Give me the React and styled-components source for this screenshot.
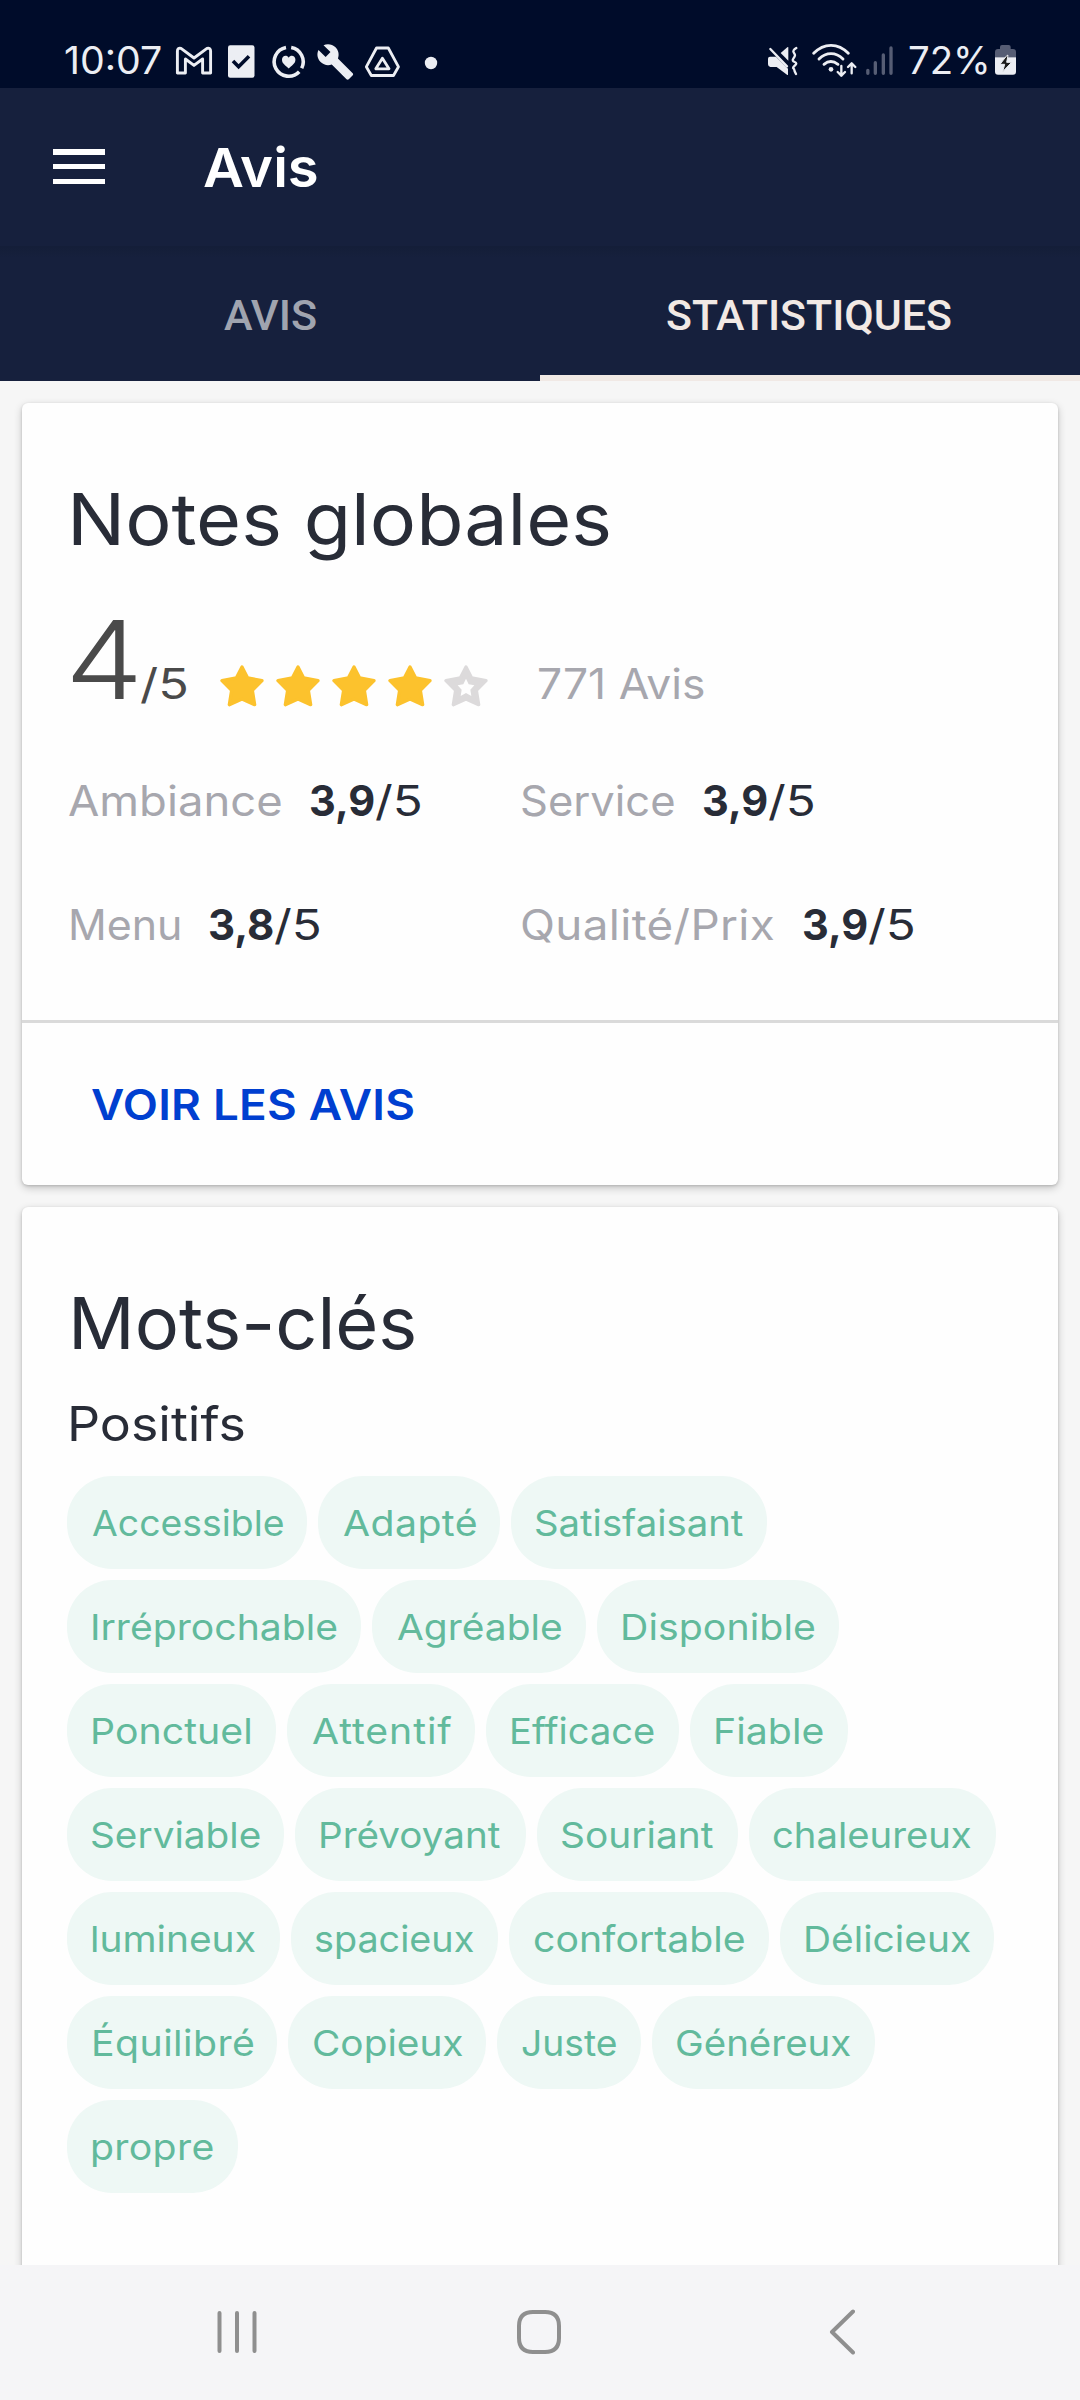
import React, { useLayoutEffect, useRef, useState } from "react";
import styled, { createGlobalStyle } from "styled-components";

const GlobalStyle = createGlobalStyle`
  * { box-sizing: border-box; }
  body { margin: 0; background: #f6f6f6; }
`;

const SANS = `Inter, "Open Sans", sans-serif`;

const TextBox = styled.span`
  display: inline-block;
  flex: none;
  white-space: pre;
  text-align: left;
  font-kerning: normal;
  margin-left: ${(p) => p.$inset || 0}px;
`;

const TextInk = styled.span`
  display: inline-block;
  transform-origin: 0 50%;
`;

/* Widens its text (first the letters, up to `stretch`, then the tracking)
   so that the drawn glyphs span exactly `width` pixels. */
function Fitted({ width, inset, stretch = 1.09, children }) {
  const ref = useRef(null);
  const [fit, setFit] = useState({ shift: 0, tracking: 0, scale: 1 });
  useLayoutEffect(() => {
    const cs = getComputedStyle(ref.current);
    const ctx = document.createElement("canvas").getContext("2d");
    ctx.font = `${cs.fontWeight} ${cs.fontSize} ${cs.fontFamily}`;
    const m = ctx.measureText(children);
    const ink = m.actualBoundingBoxLeft + m.actualBoundingBoxRight;
    const gaps = Math.max(children.length - 1, 1);
    const scale = Math.min(width / ink, stretch);
    setFit({
      scale,
      shift: m.actualBoundingBoxLeft * scale,
      tracking: children.length > 1 ? (width / scale - ink) / gaps : 0,
    });
  }, [children, width, stretch]);
  return (
    <TextBox ref={ref} $inset={inset} style={{ width }}>
      <TextInk
        style={{
          letterSpacing: fit.tracking,
          marginLeft: fit.shift,
          transform: `scaleX(${fit.scale})`,
        }}
      >
        {children}
      </TextInk>
    </TextBox>
  );
}

const Screen = styled.div`
  width: 1080px;
  height: 2400px;
  display: flex;
  flex-direction: column;
  overflow: hidden;
  background: #f6f6f6;
  font-family: ${SANS};
  color: #282c37;
`;

const StatusBar = styled.header`
  flex: none;
  height: 88px;
  padding: 34px 64px 0 65px;
  display: flex;
  justify-content: space-between;
  background: #000c2a;
  color: #eceef3;
`;

const StatusGroup = styled.div`
  display: flex;
  height: 54px;
`;

const StatusText = styled.div`
  font-size: 38.5px;
  line-height: 52px;
  font-weight: 400;
`;

const StatusIcon = styled.svg`
  display: block;
  flex: none;
  height: 46px;
  margin: 4px 0 0 ${(p) => p.$gap}px;
  overflow: visible;
`;

const AppBar = styled.div`
  flex: none;
  height: 158px;
  padding-left: 53px;
  display: flex;
  align-items: center;
  background: #16203d;
`;

const MenuButton = styled.button`
  width: 52px;
  height: 35px;
  margin-bottom: 1px;
  padding: 0;
  border: 0;
  background: none;
  display: flex;
  flex-direction: column;
  justify-content: space-between;
`;

const MenuLine = styled.span`
  height: 5.5px;
  background: #fff;
`;

const AppTitle = styled.h1`
  margin: 2px 0 0 99px;
  font-size: 54px;
  line-height: 64px;
  font-weight: 600;
  color: #fff;
`;

const Tabs = styled.nav`
  flex: none;
  height: 135px;
  display: grid;
  grid-template-columns: 1fr 1fr;
  background: linear-gradient(#141e38, #16203d 12px);
`;

const Tab = styled.div`
  display: flex;
  align-items: center;
  justify-content: center;
  padding-top: ${(p) => (p.$active ? 9 : 3)}px;
  padding-right: ${(p) => (p.$active ? 2 : 0)}px;
  border-bottom: ${(p) => (p.$active ? "6px solid #f1e9e5" : "0")};
  font-family: Roboto, sans-serif;
  font-size: 43px;
  font-weight: 500;
  color: ${(p) => (p.$active ? "#f1e9e5" : "#a0a4af")};
`;

const Content = styled.main`
  flex: 1;
  min-height: 0;
  overflow: hidden;
  padding: 22px;
  display: flex;
  flex-direction: column;
  gap: 22px;
`;

const Card = styled.section`
  flex: none;
  height: ${(p) => p.$height}px;
  display: flex;
  flex-direction: column;
  border-radius: 6px;
  background: #fefefe;
  box-shadow: 0 3px 9px rgba(0, 0, 0, 0.2), 0 1px 3px rgba(0, 0, 0, 0.16);
`;

const CardBody = styled.div`
  flex: 1;
  padding: 72px 22px 0 45px;
`;

const CardTitle = styled.h2`
  margin: 0;
  font-size: 72px;
  line-height: 88px;
  font-weight: 370;
`;

const RatingRow = styled.div`
  margin-top: 42px;
  height: 109px;
  display: flex;
  align-items: baseline;
  font-size: 42px;
  line-height: 52px;
  font-weight: 375;
  color: #4a4a4a;
`;

const Score = styled.span`
  font-size: 109px;
  line-height: 109px;
  font-weight: 320;
`;

const Stars = styled.span`
  display: flex;
  gap: 12px;
  margin: 0 0 7px 33px;
  align-self: flex-end;
`;

const StarSvg = styled.svg`
  display: block;
  width: 44px;
  height: 42px;
`;

const ReviewCount = styled.span`
  margin-left: 51px;
  color: #a7a7ae;
`;

const StatGrid = styled.div`
  margin-top: 57px;
  padding-left: 2px;
  display: grid;
  grid-template-columns: 453px 1fr;
  row-gap: 64px;
`;

const Stat = styled.div`
  display: flex;
  height: 60px;
  font-size: 42px;
  line-height: 60px;
  font-weight: 375;
`;

const StatLabel = styled.span`
  color: #a7a7ae;
  margin-right: 30px;
`;

const StatScore = styled.strong`
  font-weight: 700;
  margin-right: 1px;
`;

const CardFooter = styled.div`
  height: 165px;
  border-top: 3px solid #dadada;
  padding: 2px 0 0 70px;
  display: flex;
  align-items: center;
`;

const LinkButton = styled.button`
  padding: 0;
  border: 0;
  background: none;
  font-family: inherit;
  font-size: 42px;
  line-height: 60px;
  font-weight: 580;
  color: #003fd0;
`;

const Subtitle = styled.h3`
  margin: 27px 0 0;
  font-size: 48px;
  line-height: 60px;
  font-weight: 370;
`;

const ChipList = styled.div`
  margin-top: 22px;
  display: flex;
  flex-wrap: wrap;
  gap: 11px;
`;

const Chip = styled.span`
  width: ${(p) => p.$width}px;
  height: 93px;
  padding-top: 1px;
  border-radius: 45px;
  background: #eef8f5;
  color: #62ba9c;
  font-size: 36px;
  line-height: 93px;
  font-weight: 380;
`;

const NavBar = styled.footer`
  flex: none;
  height: 135px;
  padding: 44px 0 0 217px;
  display: flex;
  background: #f5f5f7;
`;

const NavIcon = styled.svg`
  display: block;
  width: ${(p) => p.$width}px;
  height: 46px;
  margin-left: ${(p) => p.$gap}px;
  fill: none;
  stroke: #8f8f8f;
  stroke-width: 4;
  stroke-linecap: round;
  stroke-linejoin: round;
`;

const LIGHT = "#eceef3";
const NIGHT = "#000c2a";

function MailIcon() {
  return (
    <StatusIcon $gap={15.5} width="36" viewBox="0 0 36 46" fill="none" stroke={LIGHT} strokeWidth="2.9" strokeLinejoin="round">
      <path d="M1.4 35V13q0-3.4 3.6-2.6L18 20l13-9.6q3.6-.8 3.6 2.6v22h-8V21L18 27.4 9.4 21v14z" />
    </StatusIcon>
  );
}

function CheckDocIcon() {
  return (
    <StatusIcon $gap={15.5} width="27" viewBox="0 0 27 46" fill="none">
      <rect x="0" y="7.3" width="26.5" height="32.5" rx="2.2" fill={LIGHT} />
      <path d="M5 23l5.6 5.7L21 18.3" stroke={NIGHT} strokeWidth="3.6" />
    </StatusIcon>
  );
}

function HeartRingIcon() {
  return (
    <StatusIcon $gap={17} width="34" viewBox="0 0 34 46" fill="none" stroke={LIGHT} strokeWidth="3.6">
      <path d="M19.2 9.5A14.5 14.5 0 0 1 29.7 30.2" />
      <path d="M27.2 33.7A14.5 14.5 0 1 1 14 9.5" />
      <path fill={LIGHT} stroke="none" d="M16.7 30.5C11 26 10 24.5 10 21.6c0-4 4.8-5.2 6.7-1.9 1.9-3.3 6.7-2.1 6.7 1.9 0 2.9-1 4.4-6.7 8.9z" />
    </StatusIcon>
  );
}

function WrenchIcon() {
  return (
    <StatusIcon $gap={11} width="36" viewBox="0 0 36 46" fill={LIGHT}>
      <path
        transform="translate(-1.1 4.4) scale(1.62)"
        d="M22.7 19l-9.1-9.1c.9-2.3.4-5-1.5-6.9-2-2-5-2.4-7.4-1.3L9 6 6 9 1.6 4.7C.4 7.1.9 10.1 2.9 12.1c1.9 1.9 4.6 2.4 6.9 1.5l9.1 9.1c.4.4 1 .4 1.4 0l2.3-2.3c.5-.4.5-1.1.1-1.4z"
      />
    </StatusIcon>
  );
}

function DriveIcon() {
  return (
    <StatusIcon $gap={12} width="35" viewBox="0 0 35 46" fill="none" stroke={LIGHT} strokeWidth="2.8" strokeLinejoin="round">
      <path d="M11.5 10h11.8l10.2 18.8-5 8.7H6.3l-5-8.7z" />
      <path d="M17.4 20.2l-6.6 10.6h13.2z" />
    </StatusIcon>
  );
}

function MuteIcon() {
  return (
    <StatusIcon $gap={0} width="30" viewBox="24 0 90 138" fill={LIGHT}>
      <path d="M24 62q0-6 6-6h18L84 92v18q0 2-3 0L50 87H31q-7-1-7-8z" />
      <path d="M62 45L82 28q3-2 3 1v39z" />
      <path d="M31 33l50 52" stroke={LIGHT} strokeWidth="7" strokeLinecap="round" />
      <path
        d="M109 30q-12 7-8 13t4 9-5 10 4 10 1 10-5 9 4 9l4 8"
        fill="none"
        stroke={LIGHT}
        strokeWidth="7"
        strokeLinecap="round"
      />
    </StatusIcon>
  );
}

function WifiIcon() {
  return (
    <StatusIcon
      $gap={14}
      width="45"
      viewBox="154 0 135 138"
      fill="none"
      stroke={LIGHT}
      strokeWidth="8.5"
      strokeLinecap="round"
      strokeLinejoin="round"
    >
      <path d="M159 46q23-24 52-24t52 24M175 63q16-16 36-16t36 16M190 79q20-17 42 0" />
      <circle cx="211" cy="94" r="7" fill={LIGHT} stroke="none" />
      <g strokeWidth="7">
        <path d="M242 84v29M231 102l11 11 11-11M273 106V77M262 87l11-11 11 11" />
      </g>
    </StatusIcon>
  );
}

function SignalIcon() {
  return (
    <StatusIcon $gap={9.5} width="27" viewBox="318 0 81 138" fill="none" stroke="#565d74" strokeWidth="10" strokeLinecap="round">
      <path d="M323.5 97v9M346 74v32M370 51v55M393 30v76" />
    </StatusIcon>
  );
}

function BatteryIcon() {
  return (
    <StatusIcon $gap={8.5} width="21" viewBox="705 0 63 138">
      <path d="M705 58V42q0-9 9-9h6v-6q0-6 6-6h20q6 0 6 6v6h7q9 0 9 9v16z" fill="#565d74" />
      <path d="M705 58h63v43q0 9-9 9h-45q-9 0-9-9z" fill={LIGHT} />
      <path d="M741 52l-21 27h14l-6 22 27-28h-15l4-21z" fill="#1c1c1c" stroke={LIGHT} strokeWidth="3" strokeLinejoin="round" />
    </StatusIcon>
  );
}

function Star({ filled }) {
  const color = filled ? "#fcc22d" : "#dcdadb";
  return (
    <StarSvg viewBox="23 31 132 126">
      <path
        d="M89 37L106 70 149 78 120 107 127 150 89 133 51 150 58 107 29 78 72 70z"
        fill={color}
        stroke={color}
        strokeWidth="10"
        strokeLinejoin="round"
      />
      {!filled && <path d="M89 72l8 17 17 3-12 13 3 19-16-9-16 9 3-19-12-13 17-3z" fill="#fefefe" />}
    </StarSvg>
  );
}

const STATS = [
  { label: "Ambiance", width: 212, inset: 0, score: "3,9" },
  { label: "Service", width: 152, inset: 0, score: "3,9" },
  { label: "Menu", width: 108.5, inset: 2, score: "3,8" },
  { label: "Qualité/Prix", width: 251.5, inset: 0, score: "3,9" },
];

/* [word, chip width, left inset of the word, width of the word] */
const KEYWORDS = [
  ["Accessible", 240, 25, 191.5],
  ["Adapté", 182, 25, 133.5],
  ["Satisfaisant", 256, 25, 207.5],
  ["Irréprochable", 294, 26.7, 243.7],
  ["Agréable", 214, 25, 164.5],
  ["Disponible", 242, 26, 191.5],
  ["Ponctuel", 209, 26.5, 156.5],
  ["Attentif", 188, 25, 139.5],
  ["Efficace", 193, 26, 142],
  ["Fiable", 158, 26.3, 107],
  ["Serviable", 217, 25, 168],
  ["Prévoyant", 231, 26, 179.5],
  ["Souriant", 201, 25.2, 151.5],
  ["chaleureux", 247, 24.5, 198],
  ["lumineux", 213, 25.5, 163],
  ["spacieux", 207, 24.4, 158.5],
  ["confortable", 260, 25, 210.5],
  ["Délicieux", 214, 25.8, 164.2],
  ["Équilibré", 210, 27, 159.5],
  ["Copieux", 198, 26, 148.7],
  ["Juste", 144, 25.2, 94.5],
  ["Généreux", 223, 25, 173.5],
  ["propre", 171, 25.5, 121],
];

export default function App() {
  return (
    <Screen>
      <GlobalStyle />
      <StatusBar>
        <StatusGroup>
          <StatusText>
            <Fitted width={95.5}>10:07</Fitted>
          </StatusText>
          <MailIcon />
          <CheckDocIcon />
          <HeartRingIcon />
          <WrenchIcon />
          <DriveIcon />
          <StatusIcon $gap={25} width="12" viewBox="0 0 12 46" fill={LIGHT}>
            <circle cx="6" cy="25" r="6.2" />
          </StatusIcon>
        </StatusGroup>
        <StatusGroup>
          <MuteIcon />
          <WifiIcon />
          <SignalIcon />
          <StatusText>
            <Fitted width={78} inset={15.5}>72%</Fitted>
          </StatusText>
          <BatteryIcon />
        </StatusGroup>
      </StatusBar>

      <AppBar>
        <MenuButton aria-label="Menu">
          <MenuLine />
          <MenuLine />
          <MenuLine />
        </MenuButton>
        <AppTitle>
          <Fitted width={113}>Avis</Fitted>
        </AppTitle>
      </AppBar>

      <Tabs>
        <Tab>
          <Fitted width={92}>AVIS</Fitted>
        </Tab>
        <Tab $active>
          <Fitted width={284}>STATISTIQUES</Fitted>
        </Tab>
      </Tabs>

      <Content>
        <Card $height={782}>
          <CardBody>
            <CardTitle>
              <Fitted width={535.5} inset={6.5}>Notes globales</Fitted>
            </CardTitle>
            <RatingRow>
              <Score>
                <Fitted width={64} inset={5} stretch={1.15}>4</Fitted>
              </Score>
              <Fitted width={47} inset={4} stretch={1.2}>/5</Fitted>
              <Stars>
                {[1, 2, 3, 4, 5].map((n) => (
                  <Star key={n} filled={n <= 4} />
                ))}
              </Stars>
              <ReviewCount>
                <Fitted width={165}>771 Avis</Fitted>
              </ReviewCount>
            </RatingRow>
            <StatGrid>
              {STATS.map((stat) => (
                <Stat key={stat.label}>
                  <StatLabel>
                    <Fitted width={stat.width} inset={stat.inset}>{stat.label}</Fitted>
                  </StatLabel>
                  <StatScore>
                    <Fitted width={63}>{stat.score}</Fitted>
                  </StatScore>
                  <Fitted width={46} stretch={1.2}>/5</Fitted>
                </Stat>
              ))}
            </StatGrid>
          </CardBody>
          <CardFooter>
            <LinkButton>
              <Fitted width={321.5}>VOIR LES AVIS</Fitted>
            </LinkButton>
          </CardFooter>
        </Card>

        <Card $height={1100}>
          <CardBody>
            <CardTitle>
              <Fitted width={340} inset={7}>Mots-clés</Fitted>
            </CardTitle>
            <Subtitle>
              <Fitted width={172} inset={4}>Positifs</Fitted>
            </Subtitle>
            <ChipList>
              {KEYWORDS.map(([word, chipWidth, inset, width]) => (
                <Chip key={word} $width={chipWidth}>
                  <Fitted width={width} inset={inset}>{word}</Fitted>
                </Chip>
              ))}
            </ChipList>
          </CardBody>
        </Card>
      </Content>

      <NavBar>
        <NavIcon $width={40} $gap={0} viewBox="0 0 40 46">
          <path d="M2.5 4v38M20 4v38M37.5 4v38" />
        </NavIcon>
        <NavIcon $width={44} $gap={260} viewBox="0 0 44 46">
          <path d="M16 3h12q14 0 14 14v12q0 14-14 14H16Q2 43 2 29V17Q2 3 16 3z" />
        </NavIcon>
        <NavIcon $width={26} $gap={268} viewBox="0 0 26 46">
          <path d="M24 2.5L3 23l21 20.5" />
        </NavIcon>
      </NavBar>
    </Screen>
  );
}
